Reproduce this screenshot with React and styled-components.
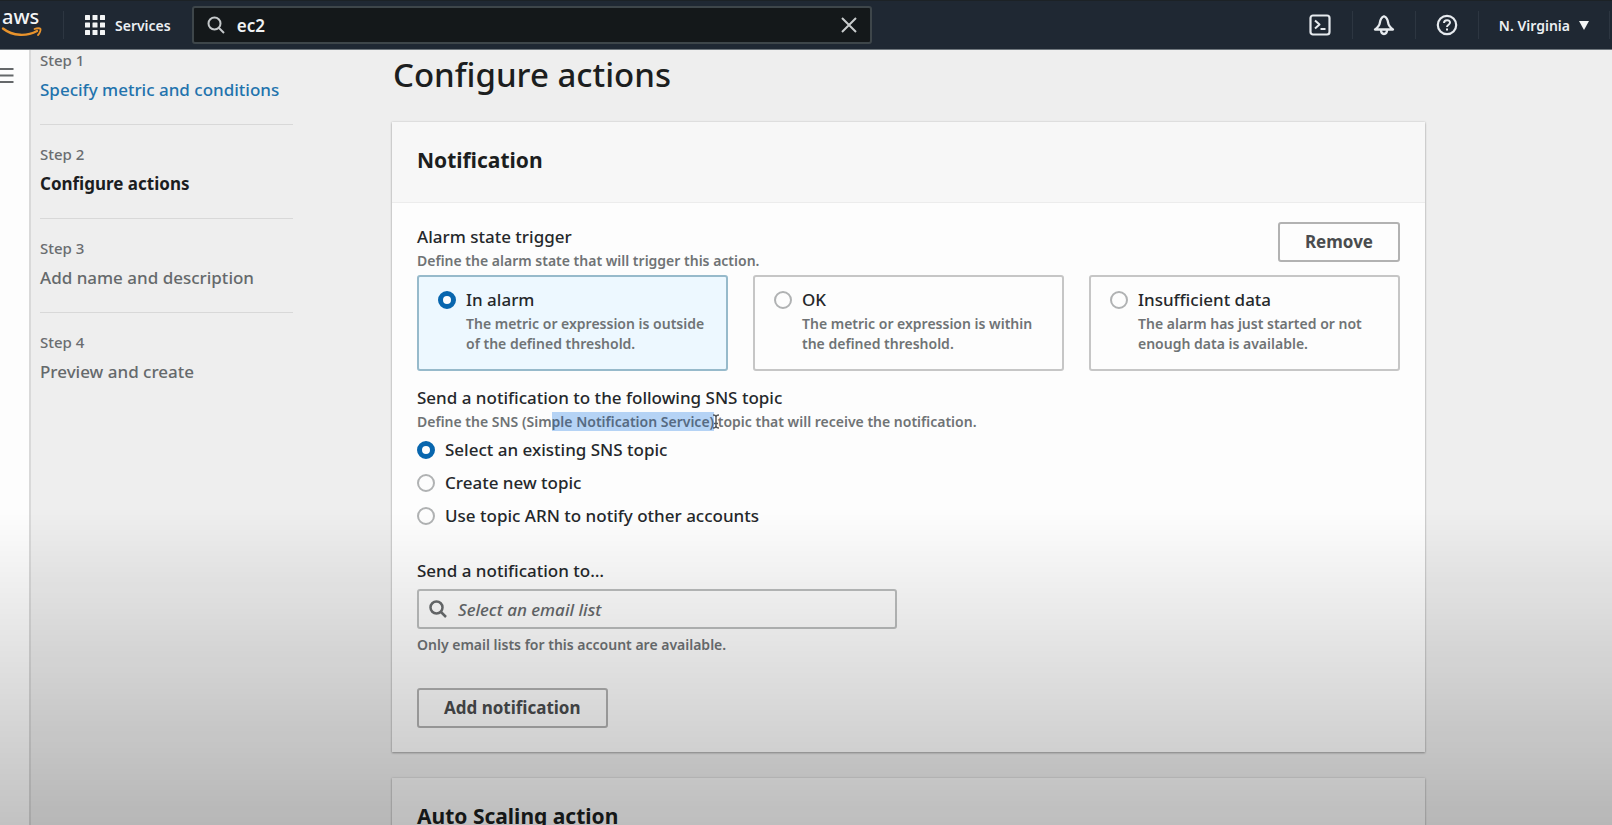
import React from "react";
import styled, { createGlobalStyle } from "styled-components";

const GlobalStyle = createGlobalStyle`
  *, *::before, *::after { box-sizing: border-box; }
  html, body, #root { height: 100%; }
  body {
    margin: 0;
    overflow: hidden;
    background: #eeeeee;
    color: #25282b;
    font-family: "Noto Sans", "Open Sans", sans-serif;
    font-size: 16px;
  }
  h1, h2, p, ol, fieldset { margin: 0; padding: 0; border: 0; }
  button, input { font-family: inherit; }
`;

const Shell = styled.div`
  display: flex;
  flex-direction: column;
  height: 100vh;
  overflow: hidden;
`;

const TopBar = styled.header`
  display: flex;
  align-items: center;
  flex: none;
  height: 50px;
  background: #1f2833;
  border-top: 1px solid #1c2226;
  border-bottom: 1px solid #6f777d;
  color: #f0f2f4;
`;

const LogoLink = styled.a`
  display: flex;
  width: 63px;
  padding-left: 1px;
  color: #f4f5f6;
`;

const BarButton = styled.button`
  display: flex;
  align-items: center;
  justify-content: center;
  height: 28px;
  gap: ${(p) => p.$gap || 0}px;
  padding: 0 ${(p) => p.$pad}px;
  border: 0;
  border-left: ${(p) => (p.$first ? "0" : "1px solid #2d3641")};
  background: none;
  color: #eceff2;
  font-size: 14px;
  font-weight: 600;
  white-space: nowrap;
`;

const RegionButton = styled(BarButton)`
  border-right: 1px solid #2d3641;
  margin-right: 2px;
`;

const BarSearch = styled.label`
  display: flex;
  align-items: center;
  flex: 0 1 680px;
  height: 38px;
  gap: 12px;
  padding: 0 12px 0 13px;
  border: 2px solid #3e464a;
  border-radius: 3px;
  background: #14181a;
`;

const BarInput = styled.input`
  flex: 1;
  min-width: 0;
  padding: 0;
  border: 0;
  outline: 0;
  background: none;
  color: #f0f2f3;
  font-size: 17px;
  font-weight: 600;
`;

const ClearButton = styled.button`
  display: flex;
  padding: 0;
  border: 0;
  background: none;
`;

const BarTools = styled.div`
  display: flex;
  align-items: center;
  margin-left: auto;
`;

const Body = styled.div`
  display: flex;
  flex: 1;
  min-height: 0;
`;

const Rail = styled.aside`
  flex: none;
  width: 31px;
  padding-top: 17px;
  border-right: 2px solid #d9d9d9;
  background: #fdfdfd;
`;

const MenuButton = styled.button`
  display: flex;
  padding: 0;
  border: 0;
  background: none;
`;

const Page = styled.div`
  display: flex;
  flex: 1;
  align-items: flex-start;
  gap: 99px;
  min-width: 0;
  padding: 0 187px 0 9px;
`;

const Steps = styled.ol`
  flex: none;
  width: 253px;
  list-style: none;
`;

const Step = styled.li`
  display: flex;
  flex-direction: column;
  gap: 8px;
  padding-bottom: 22px;
  & + & {
    padding-top: 19px;
    border-top: 1px solid #d8d8d8;
  }
`;

const StepNumber = styled.span`
  color: #6a6d70;
  font-size: 15px;
  font-weight: 500;
  line-height: 20px;
`;

const StepTitle = styled.span`
  color: ${(p) => (p.$current ? "#1b1d1f" : "#65696b")};
  font-size: 17px;
  font-weight: ${(p) => (p.$current ? 700 : 500)};
  line-height: 24px;
`;

const StepLink = styled.a`
  color: #2273ad;
  font-size: 17px;
  font-weight: 500;
  line-height: 24px;
  text-decoration: none;
`;

const Main = styled.main`
  flex: 1;
  min-width: 0;
`;

const Title = styled.h1`
  padding: 4px 0 27px 1px;
  color: #1c1e20;
  font-size: 33px;
  font-weight: 500;
  line-height: 41px;
`;

const Card = styled.section`
  margin-bottom: 26px;
  background: #fdfdfd;
  box-shadow: 0 1px 2px #a0a0a0, 0 0 2px #cccccc;
`;

const CardHeader = styled.div`
  padding: 22px 25px 26px;
  border-bottom: 1px solid #ececec;
  background: #f7f7f7;
`;

const CardTitle = styled.h2`
  color: #1c1e20;
  font-size: 21px;
  font-weight: 700;
  line-height: 32px;
`;

const CardBody = styled.div`
  padding: 19px 25px 24px;
`;

const FieldRow = styled.div`
  display: flex;
  align-items: flex-start;
  justify-content: space-between;
  height: 53px;
`;

const FieldHead = styled.div`
  padding-top: ${(p) => p.$top || 0}px;
`;

const Label = styled.div`
  font-size: 17px;
  font-weight: 500;
  line-height: 24px;
`;

const InputLabel = styled.label`
  display: block;
  font-size: 17px;
  font-weight: 500;
  line-height: 24px;
`;

const Hint = styled.p`
  margin-top: 2px;
  color: #6f7375;
  font-size: 14px;
  font-weight: 600;
  line-height: 20px;
`;

const Selected = styled.mark`
  position: relative;
  background: #b5d3f5;
  color: #566a82;
`;

const Caret = styled.svg`
  position: absolute;
  top: 2px;
  right: -6px;
`;

const Button = styled.button`
  height: 40px;
  padding: 0 25px;
  border: 2px solid #b2b2b2;
  border-radius: 3px;
  background: none;
  color: #4a4c4e;
  font-size: 17px;
  font-weight: 700;
  line-height: 20px;
`;

const Tiles = styled.fieldset`
  display: grid;
  grid-template-columns: repeat(3, 1fr);
  gap: 25px;
`;

const Tile = styled.label`
  display: flex;
  align-items: flex-start;
  gap: 10px;
  min-height: 96px;
  padding: 11px 19px;
  border: 2px solid ${(p) => (p.$on ? "#97bacb" : "#c6c6c6")};
  border-radius: 3px;
  background: ${(p) => (p.$on ? "#edf8ff" : "#fdfdfd")};
`;

const Radio = styled.input.attrs({ type: "radio" })`
  appearance: none;
  flex: none;
  width: 18px;
  height: 18px;
  margin: 3px 0;
  border: 2px solid #b0b2b3;
  border-radius: 50%;
  background: #fdfdfd;
  &:checked { border: 5px solid #0866ae; }
`;

const Choices = styled.fieldset`
  display: flex;
  flex-direction: column;
  gap: 9px;
  padding: 6px 0 31px;
`;

const Choice = styled.label`
  display: flex;
  gap: 10px;
  font-size: 17px;
  font-weight: 500;
  line-height: 24px;
`;

const SearchField = styled.div`
  display: flex;
  align-items: center;
  gap: 11px;
  width: 480px;
  max-width: 100%;
  height: 40px;
  margin: 6px 0;
  padding: 0 10px;
  border: 2px solid #bcbebe;
  border-radius: 3px;
`;

const SearchInput = styled.input`
  flex: 1;
  min-width: 0;
  padding: 0;
  border: 0;
  outline: 0;
  background: none;
  font-size: 17px;
  font-weight: 500;
  &::placeholder {
    color: #66696b;
    font-style: italic;
    opacity: 1;
  }
`;

const Actions = styled.div`
  padding-top: 33px;
`;

const BottomShade = styled.div`
  position: fixed;
  right: 0;
  bottom: 0;
  left: 0;
  height: 38vh;
  pointer-events: none;
  background: linear-gradient(rgba(0, 0, 0, 0), rgba(0, 0, 0, 0.07) 30%, rgba(0, 0, 0, 0.23));
`;

function AwsLogo() {
  return (
    <svg width="42" height="44" viewBox="0 0 42 44" fill="none" role="img" aria-label="aws">
      <text x="1" y="21" fill="currentColor" fontSize="20" fontWeight="500">aws</text>
      <path d="M2 25.500C12 33.500 26 33.500 36 28" stroke="#e8932c" strokeWidth="2.400" strokeLinecap="round" />
      <path d="M33.500 26C36 25 39 25 39.500 26S38.500 30.500 37 32" stroke="#e8932c" strokeWidth="1.800" strokeLinecap="round" />
    </svg>
  );
}

function GridIcon() {
  return (
    <svg width="20" height="20" viewBox="0 0 20 20" fill="#f3f5f6">
      {[0, 7.5, 15].map((y) => [0, 7.5, 15].map((x) => <rect key={x + "-" + y} x={x} y={y} width="5" height="5" rx="0.500" />))}
    </svg>
  );
}

function SearchIcon({ color, weight }) {
  return (
    <svg width="18" height="18" viewBox="0 0 18 18" fill="none" stroke={color} strokeWidth={weight}>
      <circle cx="7.500" cy="7.500" r="6" />
      <path d="M12 12L17 17" />
    </svg>
  );
}

const iconProps = { width: 22, height: 22, viewBox: "0 0 22 22", fill: "none", stroke: "#e6eaee", strokeWidth: 2, strokeLinejoin: "round" };

function ShellIcon() {
  return (
    <svg {...iconProps}>
      <rect x="1.500" y="1.500" width="19" height="19" rx="2.500" strokeWidth="2.200" />
      <path d="M6 6.500L10.500 10.500L6 14.500M11.500 15H16.500" />
    </svg>
  );
}

function BellIcon() {
  return (
    <svg {...iconProps} strokeWidth={2.3}>
      <path d="M11 2.300C8 3.500 7.200 6 6.800 9C6.500 12 4.500 13.500 2 15.500H20C17.500 13.500 15.500 12 15.200 9C14.800 6 14 3.500 11 2.300Z" />
      <path d="M8 16C8 21.300 14 21.300 14 16" />
    </svg>
  );
}

function HelpIcon() {
  return (
    <svg {...iconProps}>
      <circle cx="11" cy="11" r="9.200" strokeWidth="2.200" />
      <path d="M8 9C8 5.300 14.200 5.300 14 8.800C13.900 10.700 11 10.800 11 13M11 14.500V16.500" />
    </svg>
  );
}

const tiles = [
  { title: "In alarm", text: "The metric or expression is outside of the defined threshold.", on: true },
  { title: "OK", text: "The metric or expression is within the defined threshold." },
  { title: "Insufficient data", text: "The alarm has just started or not enough data is available." },
];

const topics = ["Select an existing SNS topic", "Create new topic", "Use topic ARN to notify other accounts"];

export default function App() {
  return (
    <Shell>
      <GlobalStyle />
      <TopBar>
        <LogoLink href="#home"><AwsLogo /></LogoLink>
        <BarButton $pad={21} $gap={10}><GridIcon />Services</BarButton>
        <BarSearch>
          <SearchIcon color="#c5c9cb" weight={2} />
          <BarInput aria-label="Search" defaultValue="ec2" />
          <ClearButton aria-label="Clear search">
            <svg width="18" height="18" viewBox="0 0 18 18" stroke="#c9cccd" strokeWidth="2"><path d="M2 2L16 16M16 2L2 16" /></svg>
          </ClearButton>
        </BarSearch>
        <BarTools>
          <BarButton $first $pad={21} aria-label="CloudShell"><ShellIcon /></BarButton>
          <BarButton $pad={20} aria-label="Notifications"><BellIcon /></BarButton>
          <BarButton $pad={20} aria-label="Help"><HelpIcon /></BarButton>
          <RegionButton $pad={20} $gap={9}>
            N. Virginia
            <svg width="10" height="9" viewBox="0 0 10 9" fill="#f3f5f6"><path d="M0 0H10L5 9Z" /></svg>
          </RegionButton>
        </BarTools>
      </TopBar>
      <Body>
        <Rail>
          <MenuButton aria-label="Open navigation">
            <svg width="14" height="17" viewBox="0 0 14 17" stroke="#65686a" strokeWidth="2"><path d="M0 2H13.500M0 8.500H13.500M0 15H13.500" /></svg>
          </MenuButton>
        </Rail>
        <Page>
          <Steps>
            <Step><StepNumber>Step 1</StepNumber><StepLink href="#metric">Specify metric and conditions</StepLink></Step>
            <Step><StepNumber>Step 2</StepNumber><StepTitle $current>Configure actions</StepTitle></Step>
            <Step><StepNumber>Step 3</StepNumber><StepTitle>Add name and description</StepTitle></Step>
            <Step><StepNumber>Step 4</StepNumber><StepTitle>Preview and create</StepTitle></Step>
          </Steps>
          <Main>
            <Title>Configure actions</Title>
            <Card>
              <CardHeader><CardTitle>Notification</CardTitle></CardHeader>
              <CardBody>
                <FieldRow>
                  <FieldHead $top={3}>
                    <Label id="trigger">Alarm state trigger</Label>
                    <Hint>Define the alarm state that will trigger this action.</Hint>
                  </FieldHead>
                  <Button>Remove</Button>
                </FieldRow>
                <Tiles aria-labelledby="trigger">
                  {tiles.map((t) => (
                    <Tile key={t.title} $on={t.on}>
                      <Radio name="trigger" defaultChecked={t.on} />
                      <div>
                        <Label as="span">{t.title}</Label>
                        <Hint>{t.text}</Hint>
                      </div>
                    </Tile>
                  ))}
                </Tiles>
                <FieldHead $top={15}>
                  <Label id="topic">Send a notification to the following SNS topic</Label>
                  <Hint>
                    Define the SNS (Sim
                    <Selected>
                      ple Notification Service)
                      <Caret width="8" height="15" viewBox="0 0 8 15" fill="none" stroke="#55595c" strokeWidth="1.500">
                        <path d="M1 1C3 1 4 1.500 4 3V12C4 13.500 3 14 1 14M7 1C5 1 4 1.500 4 3M7 14C5 14 4 13.500 4 12M2 9.500H6" />
                      </Caret>
                    </Selected>{" "}
                    topic that will receive the notification.
                  </Hint>
                </FieldHead>
                <Choices aria-labelledby="topic">
                  {topics.map((t, i) => (
                    <Choice key={t}><Radio name="topic" defaultChecked={i === 0} />{t}</Choice>
                  ))}
                </Choices>
                <InputLabel htmlFor="email">Send a notification to…</InputLabel>
                <SearchField>
                  <SearchIcon color="#696c6e" weight={2.5} />
                  <SearchInput id="email" placeholder="Select an email list" />
                </SearchField>
                <Hint>Only email lists for this account are available.</Hint>
                <Actions><Button>Add notification</Button></Actions>
              </CardBody>
            </Card>
            <Card>
              <CardHeader><CardTitle>Auto Scaling action</CardTitle></CardHeader>
            </Card>
          </Main>
        </Page>
      </Body>
      <BottomShade />
    </Shell>
  );
}
